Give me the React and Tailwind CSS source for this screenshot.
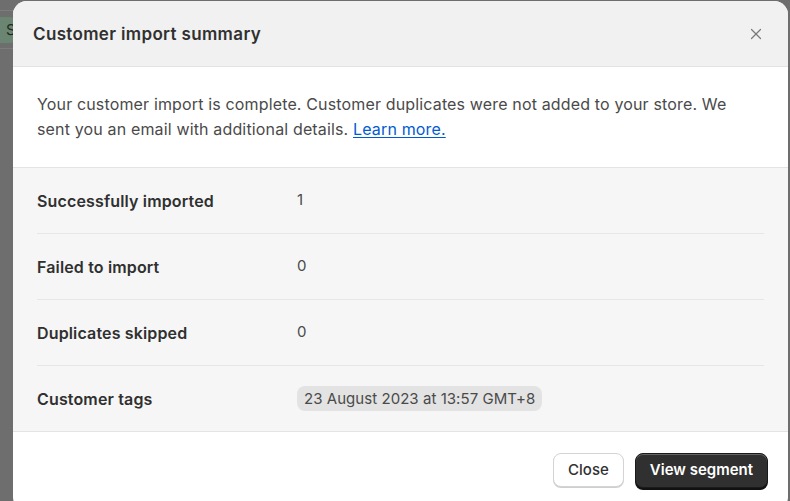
import { X } from 'lucide-react';

const rows = [
  { label: 'Successfully imported', value: '1' },
  { label: 'Failed to import', value: '0' },
  { label: 'Duplicates skipped', value: '0' },
];

export default function App() {
  return (
    <div
      className="relative w-[790px] h-[501px] overflow-hidden bg-[#6e6e6e]"
      style={{ fontFamily: 'Inter, "Noto Sans", sans-serif' }}
    >
      {/* page behind the overlay */}
      <div className="absolute left-0 top-[10px] w-[20px] h-[1px] bg-[#7c7c7c]" />
      <div className="absolute left-[-12px] top-[17px] w-[30px] h-[26px] rounded-[8px] bg-[#6a8571] text-[#1f2a22] text-[15px] leading-[26px] pl-[18px]">
        S
      </div>
      <div className="absolute left-0 top-[48px] w-[20px] h-[1px] bg-[#7c7c7c]" />

      <div className="relative ml-[13px] mt-[1px] w-[775px] h-[510px] rounded-[14px] bg-white overflow-hidden">
        <div className="h-[66px] bg-[#f1f1f1] border-b border-[#e3e3e3] flex items-center justify-between pl-5 pr-[23px]">
          <h2 className="pt-[3px] text-[17px] font-semibold text-[#303030] tracking-[0.35px]">Customer import summary</h2>
          <X size={18} strokeWidth={1.6} className="text-[#7a7a7a]" />
        </div>

        <div className="px-6 pt-[25px] pb-[25px] border-b border-[#e3e3e3] text-[16px] leading-[25px] tracking-[0.15px] text-[#4a4a4a]">
          Your customer import is complete. Customer duplicates were not added to your store. We
          <br />
          sent you an email with additional details.{' '}
          <a href="#" className="text-[#005bd3] underline underline-offset-2">Learn more.</a>
        </div>

        <div className="bg-[#f6f6f6] px-6 border-b border-[#e3e3e3]">
          {rows.map((r) => (
            <div key={r.label} className="h-[66px] flex items-center border-b border-[#e6e6e6] text-[15px]">
              <div className="w-[260px] text-[16px] font-semibold tracking-[0.15px] text-[#303030]">{r.label}</div>
              <div className="text-[#4a4a4a]">{r.value}</div>
            </div>
          ))}
          <div className="h-[65px] flex items-center text-[15px]">
            <div className="w-[260px] text-[16px] font-semibold tracking-[0.15px] text-[#303030]">Customer tags</div>
            <span className="px-[7px] h-[25px] leading-[25px] rounded-[8px] bg-[#e3e3e3] text-[#4a4a4a] tracking-[0.05px]">
              23 August 2023 at 13:57 GMT+8
            </span>
          </div>
        </div>

        <div className="flex justify-end gap-[11px] pt-[21px] pr-5">
          <button className="h-[34px] px-[14px] rounded-[8px] bg-white border border-[#d4d4d4] shadow-[0_1px_0_#cfcfcf] text-[15px] font-medium text-[#303030]">
            Close
          </button>
          <button className="h-[35px] px-[14px] rounded-[8px] bg-[#303030] border border-[#1a1a1a] shadow-[inset_0_1px_0_rgba(255,255,255,0.25),0_2px_0_#111] text-[15px] font-semibold text-white">
            View segment
          </button>
        </div>
      </div>
    </div>
  );
}
